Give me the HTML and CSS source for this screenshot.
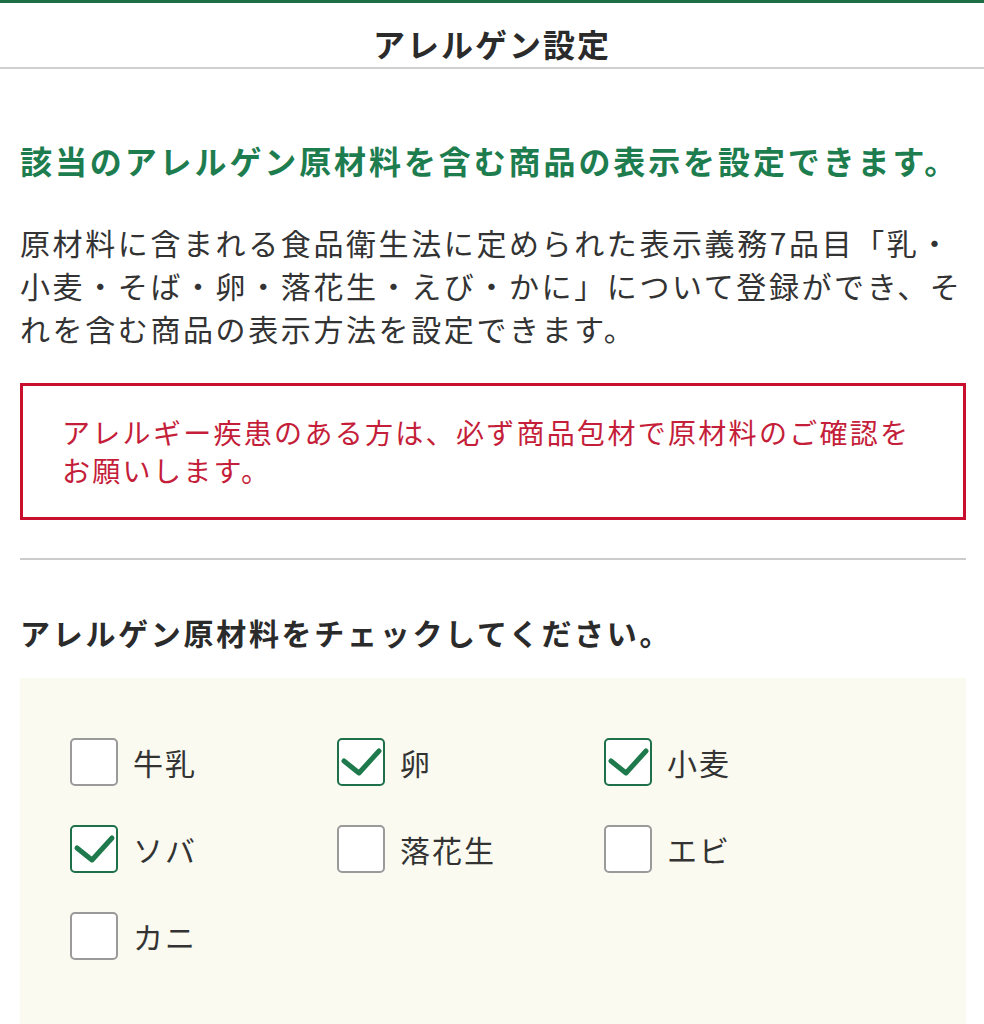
FILE: index.html
```html
<!DOCTYPE html>
<html lang="ja">
<head>
<meta charset="utf-8">
<title>アレルゲン設定</title>
<link rel="stylesheet" href="styles.css">
</head>
<body>
<div class="topbar"></div>
<header class="header"><h1 class="title">アレルゲン設定</h1></header>
<main class="main">
  <h2 class="lead">該当のアレルゲン原材料を含む商品の表示を設定できます。</h2>
  <p class="desc">原材料に含まれる食品衛生法に定められた表示義務7品目「乳・小麦・そば・卵・落花生・えび・かに」について登録ができ、それを含む商品の表示方法を設定できます。</p>
  <div class="notice">アレルギー疾患のある方は、必ず商品包材で原材料のご確認をお願いします。</div>
  <hr class="divider">
  <h3 class="subhead">アレルゲン原材料をチェックしてください。</h3>
  <div class="panel">
    <div class="grid">
      <label class="item"><span class="box"></span><span class="label">牛乳</span></label>
      <label class="item"><span class="box checked"><svg viewBox="0 0 44 44"><path d="M5 21 L20 33 L40 11"/></svg></span><span class="label">卵</span></label>
      <label class="item"><span class="box checked"><svg viewBox="0 0 44 44"><path d="M5 21 L20 33 L40 11"/></svg></span><span class="label">小麦</span></label>
      <label class="item"><span class="box checked"><svg viewBox="0 0 44 44"><path d="M5 21 L20 33 L40 11"/></svg></span><span class="label">ソバ</span></label>
      <label class="item"><span class="box"></span><span class="label">落花生</span></label>
      <label class="item"><span class="box"></span><span class="label">エビ</span></label>
      <label class="item"><span class="box"></span><span class="label">カニ</span></label>
    </div>
  </div>
</main>
</body>
</html>
```
FILE: styles.css
```css
html, body {
  margin: 0;
  padding: 0;
  background: #ffffff;
}
body {
  font-family: "Noto Sans CJK JP", "Noto Sans", sans-serif;
  color: #333333;
  width: 984px;
  height: 1024px;
  overflow: hidden;
}
.topbar {
  height: 3px;
  background: #1d6f45;
}
.header {
  height: 64px;
  border-bottom: 2px solid #cfcfcf;
  display: flex;
  align-items: center;
  justify-content: center;
}
.title {
  margin: 0;
  font-size: 32px;
  font-weight: 700;
  letter-spacing: 2px;
  line-height: 44px;
  color: #2b2b2b;
  padding-top: 16px;
}
.main {
  padding: 0 18px 0 20px;
}
.lead {
  margin: 69px 0 0;
  font-size: 32px;
  line-height: 44px;
  font-weight: 700;
  letter-spacing: 2.9px;
  white-space: nowrap;
  color: #1e7d4f;
}
.desc {
  margin: 39px 0 0;
  font-size: 30px;
  line-height: 43px;
  letter-spacing: 2.6px;
  color: #333333;
}
.notice {
  margin-top: 33px;
  border: 3px solid #c8102e;
  padding: 27px 40px 28px 39px;
  font-size: 28px;
  line-height: 38px;
  letter-spacing: 2.3px;
  color: #c41e3a;
}
.divider {
  margin: 38px 0 0;
  border: 0;
  border-top: 2px solid #cccccc;
  height: 0;
}
.subhead {
  margin: 50px 0 0;
  font-size: 30px;
  line-height: 44px;
  font-weight: 700;
  letter-spacing: 2.7px;
  color: #2b2b2b;
}
.panel {
  margin-top: 24px;
  background: #fafaf0;
  padding: 60px 0 80px 50px;
}
.grid {
  display: grid;
  grid-template-columns: 267px 267px 267px;
  row-gap: 39px;
}
.item {
  display: flex;
  align-items: center;
  gap: 15px;
}
.box {
  width: 44px;
  height: 44px;
  border: 2px solid #9a9a9a;
  border-radius: 5px;
  background: #ffffff;
  display: flex;
  align-items: center;
  justify-content: center;
}
.box.checked {
  border-color: #1e7049;
}
.box svg {
  width: 44px;
  height: 44px;
  overflow: visible;
}
.box svg path {
  fill: none;
  stroke: #1e7a4c;
  stroke-width: 5;
  stroke-linecap: round;
  stroke-linejoin: round;
}
.label {
  font-size: 30px;
  line-height: 44px;
  letter-spacing: 2px;
  color: #333333;
}
```
